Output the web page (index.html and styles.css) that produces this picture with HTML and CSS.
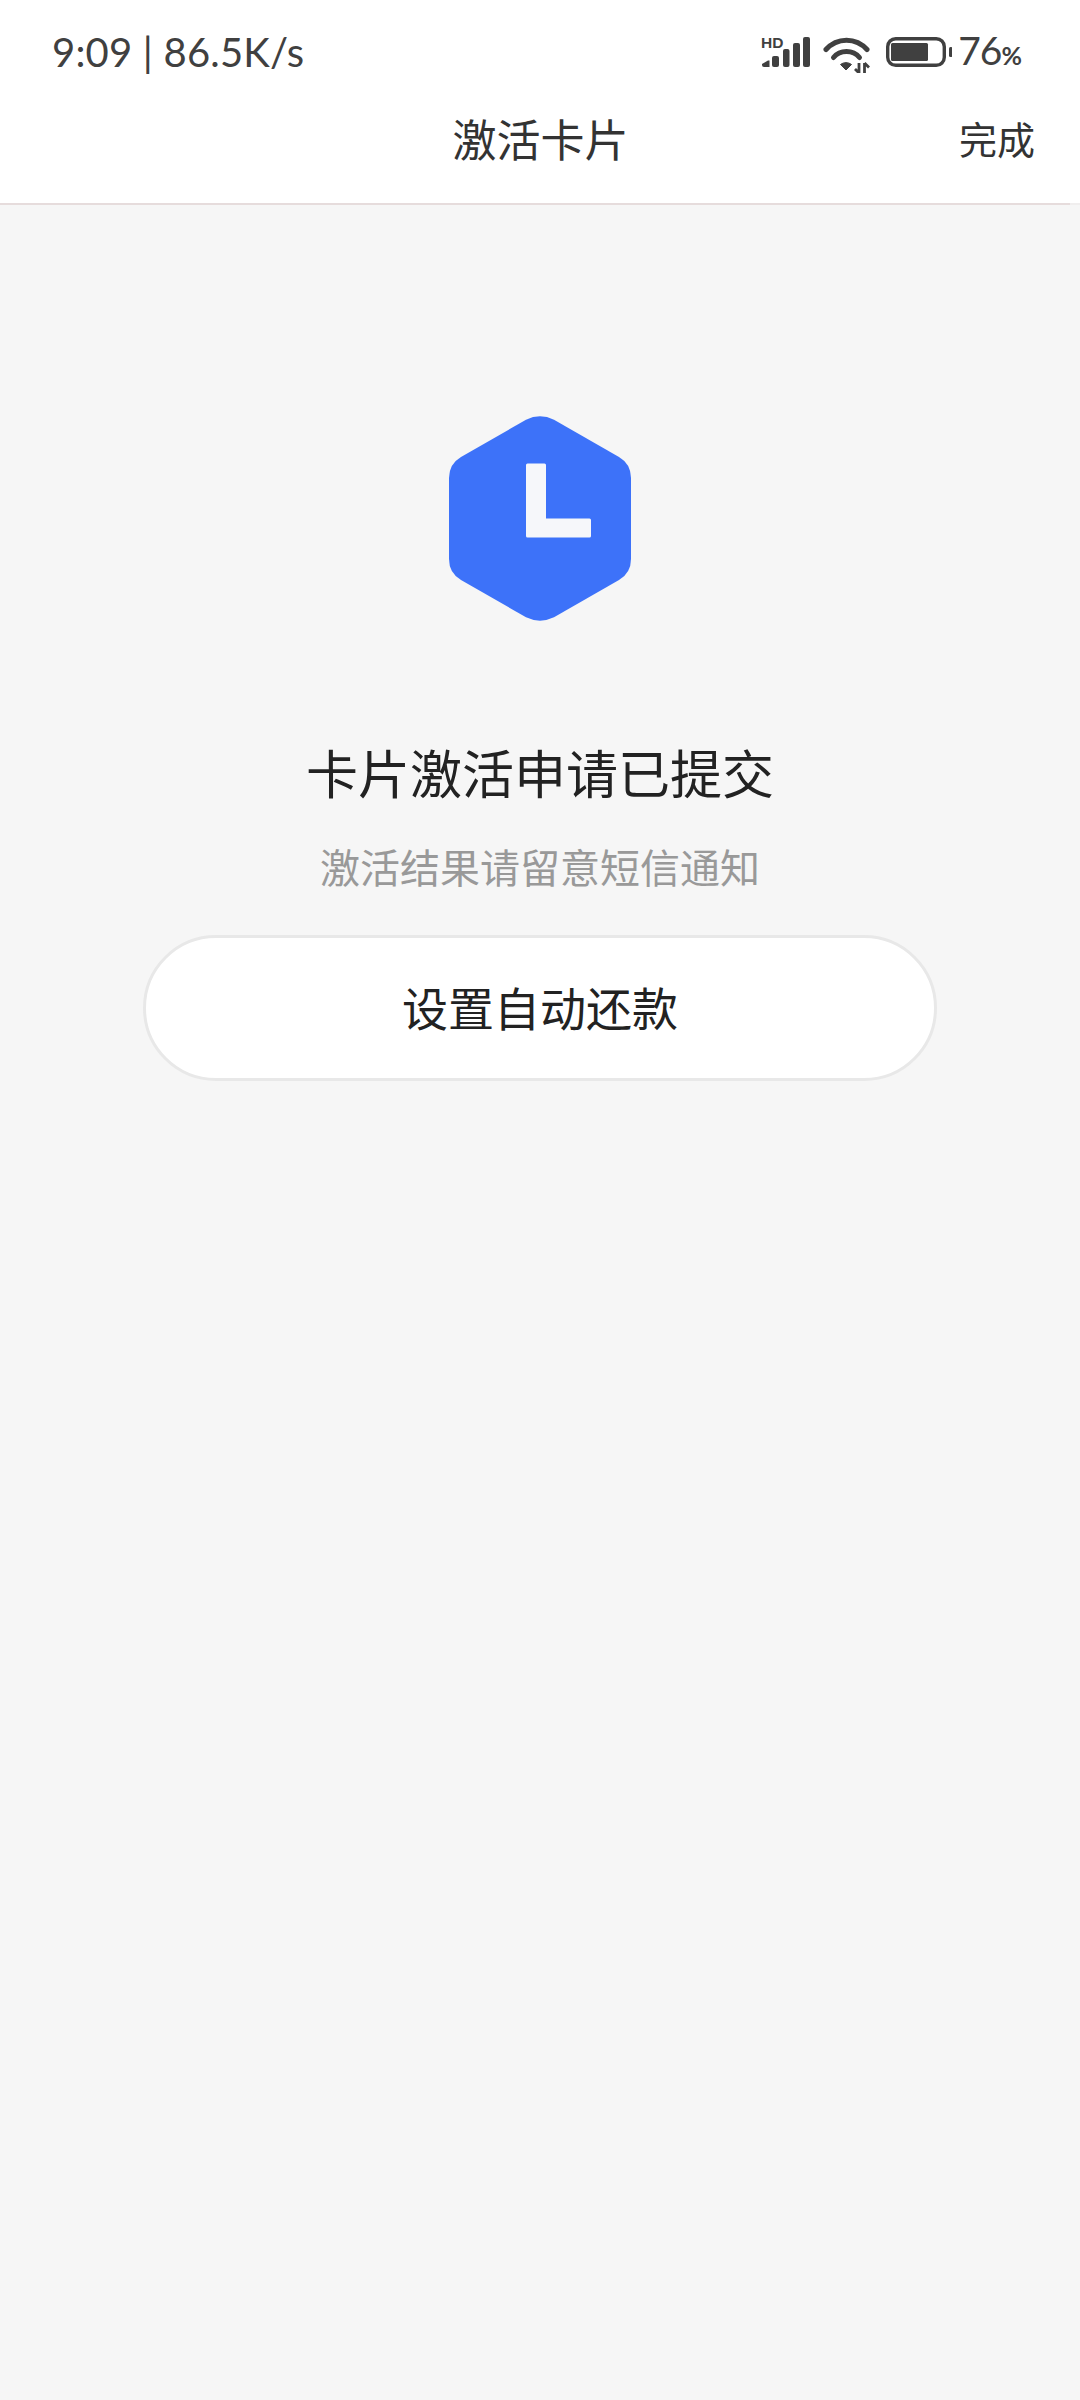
FILE: index.html
```html
<!DOCTYPE html>
<html lang="zh-CN">
<head>
<meta charset="utf-8">
<title>激活卡片</title>
<link rel="stylesheet" href="styles.css">
</head>
<body>
<div class="top">
  <div class="status">
    <span class="status-text">9:09 | 86.5K/s</span>
    <div class="status-icons">
      <svg class="i-signal" width="50" height="34" viewBox="0 -4 50 34">
        <text x="1" y="11" class="hd">HD</text>
        <path d="M2 28V27L8 23.500H9.500V30H4Q2 30 2 28Z" fill="#404040"/>
        <rect x="12" y="19" width="7" height="11" rx="2" fill="#404040"/>
        <rect x="23" y="12" width="6.500" height="18" rx="2" fill="#404040"/>
        <rect x="33" y="6" width="7" height="24" rx="2" fill="#404040"/>
        <rect x="43" y="0" width="7" height="30" rx="2" fill="#404040"/>
      </svg>
      <svg class="i-wifi" width="48" height="37" viewBox="0 0 48 37">
        <path d="M3 13.500C14 1 33 1 44 13.500" fill="none" stroke="#404040" stroke-width="5" stroke-linecap="round"/>
        <path d="M10.500 21.500C17 13.500 30 13.500 36.500 21.500" fill="none" stroke="#404040" stroke-width="5" stroke-linecap="round"/>
        <path d="M17.500 28.500L23 34L28.500 28.500C25 26 21 26 17.500 28.500Z" fill="#404040" stroke="#404040" stroke-linejoin="round"/>
        <path d="M36 27V37M36 37L32 33M41.500 37V27M41.500 27L46 31.500" fill="none" stroke="#404040" stroke-width="2.800"/>
      </svg>
      <svg class="i-batt" width="66" height="30" viewBox="0 0 66 30">
        <rect x="1.700" y="1.700" width="56.600" height="26.600" rx="8" fill="none" stroke="#404040" stroke-width="3.400"/>
        <rect x="5" y="6" width="37" height="18" rx="1.500" fill="#404040"/>
        <rect x="63" y="10" width="3.500" height="10" rx="1.500" fill="#404040"/>
      </svg>
      <span class="batt-num">76<small class="pct">%</small></span>
    </div>
  </div>
  <header class="nav">
    <span class="nav-spacer"></span>
    <h1 class="nav-title">激活卡片</h1>
    <span class="nav-done">完成</span>
  </header>
  <div class="divider"><div class="divider-line"></div></div>
</div>
<main class="content">
  <svg class="hex" width="182" height="205" viewBox="0 0 182 205">
    <path d="M77 3.700Q91 -3 105 3.700L170 41Q182 48 182 62V143Q182 157 170 164L105 201.300Q91 208 77 201.300L12 164Q0 157 0 143V62Q0 48 12 41Z" fill="#3d72f9"/>
    <path d="M77 49a1.500 1.500 0 0 1 1.500-1.500H95.500a1.500 1.500 0 0 1 1.500 1.500V102.500H140.500a1.500 1.500 0 0 1 1.500 1.500V120a1.500 1.500 0 0 1-1.500 1.500H78.500a1.500 1.500 0 0 1-1.500-1.500Z" fill="#f6f7fa"/>
  </svg>
  <h2 class="result-title">卡片激活申请已提交</h2>
  <p class="result-sub">激活结果请留意短信通知</p>
  <button class="action" type="button">设置自动还款</button>
</main>
</body>
</html>
```
FILE: styles.css
```css
* { box-sizing: border-box; }
html, body { margin: 0; padding: 0; }
body {
  width: 1080px;
  height: 2400px;
  background: #f6f6f6;
  font-family: "Noto Sans CJK SC", "Noto Sans", sans-serif;
  overflow: hidden;
}
.top {
  background: #fff;
  height: 205px;
}
.status {
  height: 100px;
  padding: 27px 58px 0 52px;
  display: flex;
  justify-content: space-between;
  align-items: flex-start;
}
.status-text {
  font-family: "Lato", sans-serif;
  font-size: 40px;
  line-height: 50px;
  color: #404040;
  letter-spacing: 0.2px;
}
.status-icons {
  display: flex;
  align-items: flex-start;
  margin-top: 10px;
}
.i-signal { margin-right: 13px; margin-top: -4px; }
.i-wifi { margin-right: 15px; margin-top: -1px; }
.i-batt { margin-right: 6px; }
.hd {
  font-family: "Liberation Sans", sans-serif;
  font-weight: 700;
  font-size: 15.5px;
  fill: #404040;
}
.batt-num {
  font-family: "Lato", sans-serif;
  font-size: 39px;
  line-height: 32px;
  height: 32px;
  margin-top: -3px;
  color: #404040;
  letter-spacing: -1px;
}
.pct { font-size: 25px; font-weight: 700; letter-spacing: 0; }
.nav {
  display: grid;
  grid-template-columns: 1fr auto 1fr;
  align-items: center;
  height: 102px;
  margin-top: -3px;
  padding: 0 45px 20px 46px;
}
.nav-title {
  margin: 0;
  font-size: 44px;
  font-weight: 400;
  color: #333;
  line-height: 60px;
}
.nav-done {
  justify-self: end;
  font-size: 38px;
  line-height: 60px;
  color: #333;
}
.divider {
  height: 2px;
  margin-top: 4px;
  background: #f0eeee;
}
.divider-line {
  width: 1070px;
  height: 2px;
  background: #e6dcdc;
}
.content {
  display: flex;
  flex-direction: column;
  align-items: center;
  padding-top: 211px;
}
.hex { display: block; }
.result-title {
  margin: 116px 0 0;
  font-size: 52px;
  font-weight: 400;
  line-height: 70px;
  color: #222;
}
.result-sub {
  margin: 31px 0 0;
  font-size: 40px;
  line-height: 56px;
  color: #999;
}
.action {
  margin-top: 41px;
  width: 794px;
  height: 146px;
  padding: 0 0 5px;
  border: 3px solid #e8e8e8;
  border-radius: 73px;
  background: #fff;
  font-family: inherit;
  font-size: 46px;
  color: #222;
}
```
